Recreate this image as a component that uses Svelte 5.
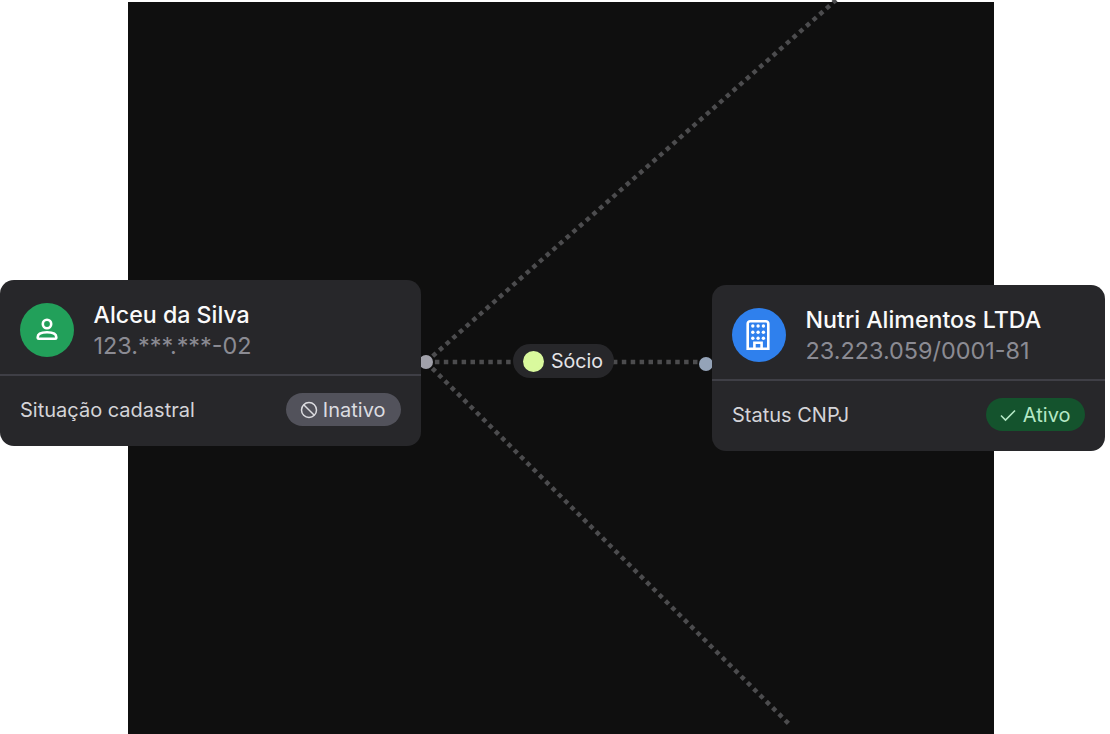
<script lang="ts">
const edges = [
  { x2: 836, y2: 0 },
  { x2: 789, y2: 724 },
  { x2: 705, y2: 362 },
];
</script>

<div class="stage">
  <div class="canvas"></div>

  <svg class="wires" width="1110" height="734" viewBox="0 0 1110 734" fill="none">
    {#each edges as e}
      <line x1="426" y1="362" x2={e.x2} y2={e.y2} stroke="#4c4c4e" stroke-width="4.5" stroke-dasharray="4.5 4.4" />
    {/each}
  </svg>

  <span class="port port-left"></span>
  <span class="port port-right"></span>

  <div class="relation">
    <span class="relation-dot"></span>
    <span>Sócio</span>
  </div>

  <div class="node node-person">
    <div class="head">
      <div class="avatar green">
        <svg width="28" height="28" viewBox="0 0 28 28" fill="none" stroke="#fff" stroke-width="2.6">
          <circle cx="14" cy="8" r="4.2" />
          <path d="M4.700 21.200c0-3.300 4-5 9.300-5s9.300 1.700 9.300 5v.4c0 .7-.5 1.200-1.200 1.200H5.900c-.7 0-1.200-.5-1.200-1.200z" stroke-linejoin="round" />
        </svg>
      </div>
      <div class="who">
        <div class="name">Alceu da Silva</div>
        <div class="doc">123.***.***-02</div>
      </div>
    </div>
    <div class="foot">
      <span class="label">Situação cadastral</span>
      <span class="pill muted">
        <svg width="18" height="18" viewBox="0 0 18 18" fill="none" stroke="currentColor" stroke-width="1.5">
          <circle cx="9" cy="9" r="7.500" />
          <path d="M3.700 3.700l10.600 10.600" />
        </svg>
        Inativo
      </span>
    </div>
  </div>

  <div class="node node-company">
    <div class="head">
      <div class="avatar blue">
        <svg width="28" height="34" viewBox="0 0 28 34" fill="none">
          <path d="M5.200 3.200h15.600a2.500 2.500 0 0 1 2.500 2.500v25.100H2.700V5.700a2.500 2.500 0 0 1 2.500-2.500z" stroke="#fff" stroke-width="2.600" />
          <path d="M9.400 30.800v-6h7.200v6" stroke="#fff" stroke-width="2.600" />
          <g fill="#fff">
            <circle cx="7.800" cy="8" r="1.700" /><circle cx="13.100" cy="8" r="1.700" /><circle cx="18.400" cy="8" r="1.700" />
            <circle cx="7.800" cy="14.200" r="1.700" /><circle cx="13.100" cy="14.200" r="1.700" /><circle cx="18.400" cy="14.200" r="1.700" />
            <circle cx="7.800" cy="20.200" r="1.700" /><circle cx="13.100" cy="20.200" r="1.700" /><circle cx="18.400" cy="20.200" r="1.700" />
          </g>
        </svg>
      </div>
      <div class="who">
        <div class="name">Nutri Alimentos LTDA</div>
        <div class="doc">23.223.059/0001-81</div>
      </div>
    </div>
    <div class="foot">
      <span class="label">Status CNPJ</span>
      <span class="pill ok">
        <svg width="18" height="18" viewBox="0 0 18 18" fill="none" stroke="currentColor" stroke-width="1.6">
          <path d="M2 9.500l4.500 4.500 9.500-9.500" />
        </svg>
        Ativo
      </span>
    </div>
  </div>
</div>

<style>
:global(body) {
  background: #fff;
}

.stage {
  position: relative;
  width: 1110px;
  height: 734px;
  overflow: hidden;
  font-family: Inter, "Liberation Sans", sans-serif;
}

.canvas {
  position: absolute;
  left: 128px;
  top: 2px;
  width: 866px;
  height: 732px;
  background: #0f0f0f;
}

.wires {
  position: absolute;
  inset: 0;
}

.port {
  position: absolute;
  width: 14px;
  height: 14px;
  border-radius: 50%;
}

.port-left {
  left: 419px;
  top: 355px;
  background: #a1a1aa;
}

.port-right {
  left: 699px;
  top: 357px;
  background: #94a3b8;
}

.relation {
  position: absolute;
  left: 513px;
  top: 344px;
  height: 34px;
  width: 101px;
  box-sizing: border-box;
  padding-left: 10px;
  display: flex;
  align-items: center;
  gap: 7px;
  border-radius: 17px;
  background: #27272a;
  color: #e4e4e7;
  font-size: 19.6px;
}

.relation-dot {
  width: 21px;
  height: 21px;
  border-radius: 50%;
  background: #d9f99d;
}

.node {
  position: absolute;
  border-radius: 14px;
  background: #27272a;
  display: flex;
  flex-direction: column;
}

.node-person {
  left: 0;
  top: 280px;
  width: 420.5px;
  height: 166px;
}

.node-company {
  left: 712px;
  top: 285px;
  width: 392.5px;
  height: 166px;
}

.head {
  height: 96px;
  box-sizing: border-box;
  padding: 23px 20px 0;
  display: flex;
  align-items: flex-start;
  gap: 19.5px;
  border-bottom: 2px solid #3f3f46;
}

.avatar {
  width: 54px;
  height: 54px;
  flex: none;
  border-radius: 50%;
  display: flex;
  align-items: center;
  justify-content: center;
}

.green {
  background: #22a05a;
}

.blue {
  background: #2f80ed;
}

.who {
  margin-top: -3.5px;
  display: flex;
  flex-direction: column;
  gap: 1px;
}

.name {
  color: #fafafa;
  font-size: 23.2px;
  line-height: 30px;
  font-weight: 450;
}

.doc {
  color: #8b8b93;
  font-size: 23.4px;
  line-height: 30px;
}

.foot {
  flex: 1;
  padding: 0 20px 3px;
  display: flex;
  align-items: center;
  justify-content: space-between;
}

.label {
  color: #d4d4d8;
  font-size: 20px;
}

.pill {
  height: 33px;
  box-sizing: border-box;
  display: flex;
  align-items: center;
  border-radius: 17px;
  font-size: 20px;
}

.pill svg {
  flex: none;
}

.muted {
  padding: 0 15px 0 14px;
  gap: 5px;
  background: #52525b;
  color: #dcdce0;
}

.ok {
  padding: 0 14px 0 13px;
  gap: 6px;
  background: #14532d;
  color: #b5e8c5;
}
</style>
